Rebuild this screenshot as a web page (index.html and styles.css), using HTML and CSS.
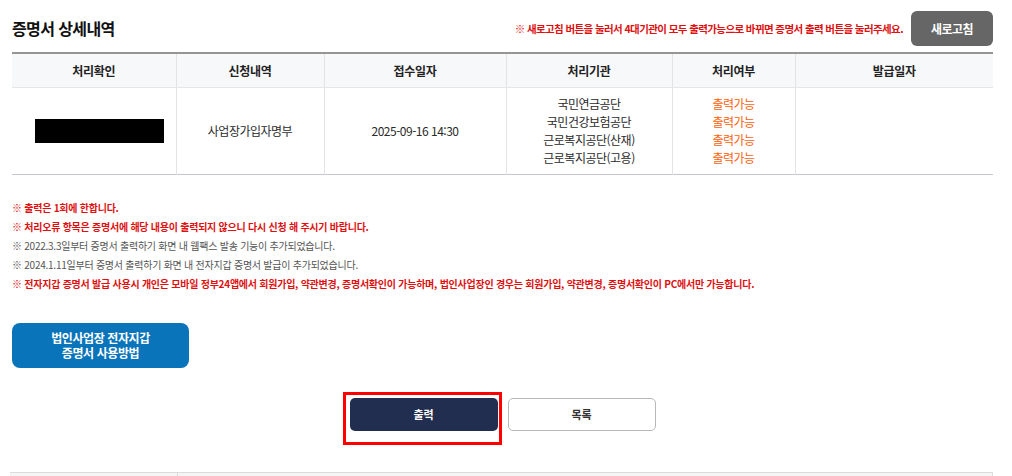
FILE: index.html
```html
<!DOCTYPE html>
<html lang="ko">
<head>
<meta charset="utf-8">
<link rel="stylesheet" href="styles.css">
</head>
<body>
<div class="wrap">
  <div class="head">
    <h2 class="title">증명서 상세내역</h2>
    <p class="notice">※ 새로고침 버튼을 눌러서 4대기관이 모두 출력가능으로 바뀌면 증명서 출력 버튼을 눌러주세요.</p>
    <button class="btn-refresh">새로고침</button>
  </div>
  <table class="grid">
    <colgroup>
      <col class="c1"><col class="c2"><col class="c3"><col class="c4"><col class="c5"><col class="c6">
    </colgroup>
    <thead>
      <tr><th>처리확인</th><th>신청내역</th><th>접수일자</th><th>처리기관</th><th>처리여부</th><th>발급일자</th></tr>
    </thead>
    <tbody>
      <tr>
        <td><span class="mask"></span></td>
        <td>사업장가입자명부</td>
        <td>2025-09-16 14:30</td>
        <td>국민연금공단<br>국민건강보험공단<br>근로복지공단(산재)<br>근로복지공단(고용)</td>
        <td class="ok">출력가능<br>출력가능<br>출력가능<br>출력가능</td>
        <td></td>
      </tr>
    </tbody>
  </table>
  <ul class="notes">
    <li class="red">※ 출력은 1회에 한합니다.</li>
    <li class="red">※ 처리오류 항목은 증명서에 해당 내용이 출력되지 않으니 다시 신청 해 주시기 바랍니다.</li>
    <li class="gray">※ 2022.3.3일부터 증명서 출력하기 화면 내 웹팩스 발송 기능이 추가되었습니다.</li>
    <li class="gray">※ 2024.1.11일부터 증명서 출력하기 화면 내 전자지갑 증명서 발급이 추가되었습니다.</li>
    <li class="red">※ 전자지갑 증명서 발급 사용시 개인은 모바일 정부24앱에서 회원가입, 약관변경, 증명서확인이 가능하며, 법인사업장인 경우는 회원가입, 약관변경, 증명서확인이 PC에서만 가능합니다.</li>
  </ul>
  <button class="btn-guide">법인사업장 전자지갑<br>증명서 사용방법</button>
  <div class="actions">
    <span class="highlight"><button class="btn-print">출력</button></span>
    <button class="btn-list">목록</button>
  </div>
  <div class="foot">
    <span class="f1"></span><span class="f2"></span><span class="f3"></span>
  </div>
</div>
</body>
</html>
```
FILE: styles.css
```css
* { box-sizing: border-box; }
html, body { margin: 0; padding: 0; background: #fff; }
body {
  font-family: "Noto Sans CJK KR", "Noto Sans", sans-serif;
  color: #222;
  overflow: hidden;
}
.wrap { padding: 11px 19px 0 12px; }
.head { display: flex; align-items: center; height: 35px; }
.title {
  margin: 0;
  font-size: 16px;
  font-weight: 700;
  letter-spacing: -0.6px;
  color: #111;
  position: relative;
  top: -1px;
}
.notice {
  margin: 0 8px 0 auto;
  font-size: 10.5px;
  font-weight: 700;
  letter-spacing: -0.6px;
  color: #e01010;
}
.btn-refresh {
  width: 82px;
  height: 35px;
  border: 0;
  border-radius: 6px;
  background: #666;
  color: #fff;
  font-family: inherit;
  font-size: 12px;
  font-weight: 700;
  letter-spacing: -0.5px;
}
.grid {
  width: 100%;
  margin-top: 6px;
  border-collapse: collapse;
  table-layout: fixed;
  border-top: 2px solid #959595;
  border-bottom: 1px solid #c5c5d3;
}
.c1 { width: 164px; } .c2 { width: 148px; } .c3 { width: 182px; }
.c4 { width: 166px; } .c5 { width: 123px; } .c6 { width: 198px; }
.grid th {
  height: 34px;
  background: #f7f8fa;
  font-size: 12px;
  font-weight: 700;
  color: #222;
  border-bottom: 1px solid #e6e6e6;
  border-left: 1px solid #e3e3e3;
  letter-spacing: -0.3px;
}
.grid td {
  height: 87px;
  text-align: center;
  font-size: 12px;
  line-height: 18px;
  color: #2a2a2a;
  border-left: 1px solid #e3e3e3;
  letter-spacing: -0.5px;
}
.grid th:first-child, .grid td:first-child { border-left: 0; }
.grid td.ok { color: #ff5f0a; }
.mask {
  display: inline-block;
  width: 129px;
  height: 24px;
  background: #000;
  vertical-align: middle;
}
.grid td:first-child { text-align: left; padding-left: 23px; }
.notes {
  list-style: none;
  margin: 23px 0 0;
  padding: 0;
  font-size: 10px;
  line-height: 19px;
  letter-spacing: -0.25px;
}
.notes .red { color: #e01010; font-weight: 700; }
.notes .gray { color: #555; }
.btn-guide {
  display: block;
  margin-top: 30px;
  width: 177px;
  height: 45px;
  border: 0;
  border-radius: 8px;
  background: #0a74bb;
  color: #fff;
  font-family: inherit;
  font-size: 12px;
  font-weight: 700;
  line-height: 15px;
  letter-spacing: -0.4px;
}
.actions {
  display: flex;
  justify-content: center;
  gap: 10px;
  margin-top: 30px;
}
.highlight { position: relative; display: block; }
.highlight::after {
  content: "";
  position: absolute;
  left: -7px; top: -6px; right: -4px; bottom: -14px;
  border: 3px solid #ff0000;
}
.btn-print, .btn-list {
  display: block;
  width: 148px;
  height: 33px;
  border-radius: 5px;
  font-family: inherit;
  font-size: 11px;
  font-weight: 700;
}
.btn-print { background: #222e50; color: #fff; border: 0; }
.btn-list { background: #fff; color: #333; border: 1px solid #b8b8b8; }
.foot {
  display: flex;
  margin-top: 41px;
  margin-left: -2px;
  height: 20px;
  border-top: 1px solid #dcdcdc;
  background: #f5f5f5;
}
.foot span { display: block; height: 100%; }
.f1 { width: 167px; }
.f2 { flex: 1; border-left: 1px solid #dcdcdc; }
.f3 { width: 1px; border-left: 1px solid #dcdcdc; }
```
